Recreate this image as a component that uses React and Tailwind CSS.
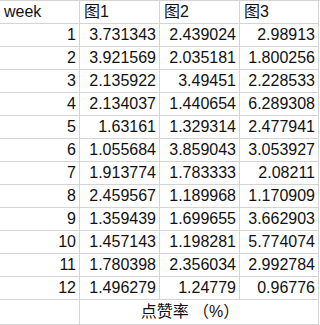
const rows = [
  [1, "3.731343", "2.439024", "2.98913"],
  [2, "3.921569", "2.035181", "1.800256"],
  [3, "2.135922", "3.49451", "2.228533"],
  [4, "2.134037", "1.440654", "6.289308"],
  [5, "1.63161", "1.329314", "2.477941"],
  [6, "1.055684", "3.859043", "3.053927"],
  [7, "1.913774", "1.783333", "2.08211"],
  [8, "2.459567", "1.189968", "1.170909"],
  [9, "1.359439", "1.699655", "3.662903"],
  [10, "1.457143", "1.198281", "5.774074"],
  [11, "1.780398", "2.356034", "2.992784"],
  [12, "1.496279", "1.24779", "0.96776"],
];

const font = { fontFamily: '"Liberation Sans", "Noto Sans CJK SC", sans-serif' };

export default function App() {
  const cell = "h-[23px] border-r border-b border-[#d4d4d4] flex items-end pb-[1px] overflow-hidden whitespace-nowrap";

  return (
    <div className="w-[320px] h-[325px] bg-white text-[16px] leading-[20px] text-[#111]" style={font}>
      <div className="grid grid-cols-[80px_80px_80px_79px] border-t border-[#d4d4d4]">
        {/* header */}
        <div className={`${cell} h-[22px] pl-[4px]`}>week</div>
        <div className={`${cell} h-[22px] pl-[4px]`}>图1</div>
        <div className={`${cell} h-[22px] pl-[4px]`}>图2</div>
        <div className={`${cell} h-[22px] pl-[4px]`}>图3</div>

        {/* data */}
        {rows.map(r => (
          <div key={r[0]} className="contents">
            {r.map((v, i) => (
              <div key={i} className={`${cell} justify-end pr-[3px]`}>{v}</div>
            ))}
          </div>
        ))}

        {/* footer */}
        <div className={`${cell} h-[25px]`}></div>
        <div className={`${cell} h-[25px] col-span-3 justify-center pb-[2px] pr-[18px]`}>点赞率 （%）</div>
      </div>
    </div>
  );
}
